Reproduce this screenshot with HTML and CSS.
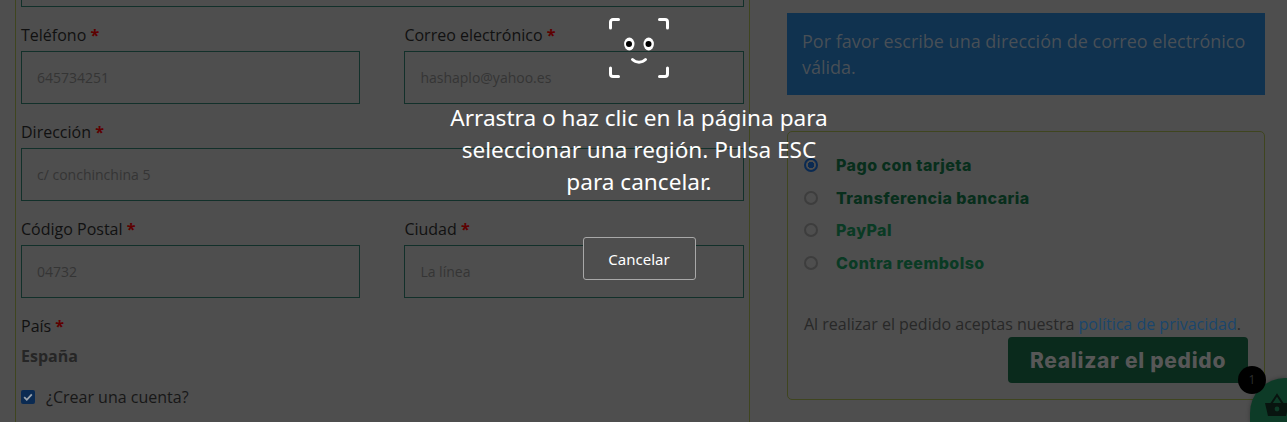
FILE: index.html
```html
<!DOCTYPE html>
<html lang="es">
<head>
<meta charset="utf-8">
<title>Finalizar compra</title>
<link rel="stylesheet" href="styles.css">
</head>
<body>
<main class="page">
  <form class="billing">
    <div class="field field-top"><input class="input" type="text"></div>
    <div class="row">
      <div class="field"><label class="label">Teléfono <b class="req">*</b></label><input class="input" value="645734251"></div>
      <div class="field"><label class="label">Correo electrónico <b class="req">*</b></label><input class="input" value="hashaplo@yahoo.es"></div>
    </div>
    <div class="field"><label class="label">Dirección <b class="req">*</b></label><input class="input" value="c/ conchinchina 5"></div>
    <div class="row">
      <div class="field"><label class="label">Código Postal <b class="req">*</b></label><input class="input" value="04732"></div>
      <div class="field"><label class="label">Ciudad <b class="req">*</b></label><input class="input" value="La línea"></div>
    </div>
    <div class="field"><label class="label">País <b class="req">*</b></label><strong class="country">España</strong></div>
    <label class="account">
      <span class="check"><svg viewBox="0 0 14 14" width="14" height="14"><path d="M3.2 7.2l2.6 2.6 5-5.4" fill="none" stroke="#9aa3ad" stroke-width="1.8"/></svg></span>
      ¿Crear una cuenta?
    </label>
  </form>
  <aside class="side">
    <div class="notice">Por favor escribe una dirección de correo electrónico válida.</div>
    <section class="payment">
      <ul class="methods">
        <li class="method"><span class="radio radio-on"></span>Pago con tarjeta</li>
        <li class="method"><span class="radio"></span>Transferencia bancaria</li>
        <li class="method method-lit"><span class="radio"></span>PayPal</li>
        <li class="method method-lit"><span class="radio"></span>Contra reembolso</li>
      </ul>
      <p class="terms">Al realizar el pedido aceptas nuestra <a class="link">política de privacidad</a>.</p>
      <div class="actions"><button class="submit" type="button">Realizar el pedido</button></div>
    </section>
  </aside>
</main>

<div class="cart">
  <svg class="cart-icon" viewBox="0 0 26 24" width="26" height="24"><path d="M1 10h24l-3 13H4z" fill="#08140f"/><path d="M7 11l6-9 6 9" fill="none" stroke="#08140f" stroke-width="2"/><circle cx="13" cy="16" r="2.4" fill="#0d3b27"/></svg>
</div>
<span class="badge">1</span>

<div class="capture">
  <svg class="face" viewBox="0 0 60 60" width="60" height="60">
    <g fill="none" stroke="#fff" stroke-width="3" stroke-linecap="round" stroke-linejoin="round">
      <path d="M1.5 10V4a2.500 2.500 0 0 1 2.500-2.500H9.500"/>
      <path d="M50.500 1.500H56a2.500 2.500 0 0 1 2.500 2.500v6"/>
      <path d="M1.500 50v6A2.500 2.500 0 0 0 4 58.500h5.500"/>
      <path d="M50.500 58.500H56a2.500 2.500 0 0 0 2.500-2.500v-6"/>
      <path d="M23.500 41.500c3.500 3.500 9.500 3.500 13 0"/>
    </g>
    <ellipse cx="20.300" cy="26" rx="5.200" ry="6.500" fill="#fff"/>
    <ellipse cx="39.700" cy="26" rx="5.200" ry="6.500" fill="#fff"/>
    <circle cx="20" cy="26" r="3" fill="#000"/>
    <circle cx="39.500" cy="26" r="3" fill="#000"/>
  </svg>
  <p class="capture-text">Arrastra o haz clic en la página para seleccionar una región. Pulsa ESC para cancelar.</p>
  <button class="cancel" type="button">Cancelar</button>
</div>
</body>
</html>
```
FILE: styles.css
```css
* { box-sizing: border-box; }
html, body { margin: 0; height: 422px; overflow: hidden; }
body {
  background: #4e4e4e;
  font-family: "Open Sans", "Noto Sans", sans-serif;
  font-size: 16px;
  color: #111;
  position: relative;
}
.page {
  display: flex;
  align-items: flex-start;
  height: 422px;
  padding-left: 15px;
}
.billing {
  width: 735px;
  height: 468px;
  margin-top: -46px;
  padding: 0 5px;
  border-left: 1px solid #3f451f;
  border-right: 1px solid #3f451f;
  flex: none;
}
.row {
  display: grid;
  grid-template-columns: 339.400px 339.600px;
  column-gap: 44px;
}
.field { display: flex; flex-direction: column; }
.field-top { height: 53px; }
.label {
  height: 44px;
  padding-top: 17px;
  line-height: 22px;
  color: #111;
}
.req { color: #5e0000; font-weight: 700; }
.input {
  height: 53px;
  width: 100%;
  padding: 0 15px;
  border: 1px solid #12302a;
  background: transparent;
  font: 14px "Open Sans", sans-serif;
  color: #353535;
  outline: none;
}
.country {
  margin-top: 3px;
  line-height: 22px;
  color: #262626;
  font-weight: 700;
}
.account {
  display: flex;
  align-items: center;
  gap: 11px;
  margin-top: 19px;
  line-height: 22px;
  color: #171717;
}
.check {
  width: 14px;
  height: 14px;
  border-radius: 2px;
  background: #0a2a52;
  display: block;
}
.check svg { display: block; }
.side {
  width: 478px;
  margin-left: 37px;
  padding-top: 13px;
  flex: none;
}
.notice {
  height: 82px;
  padding: 15px;
  background: #10324f;
  color: #484f56;
  font-size: 18px;
  line-height: 26px;
}
.payment {
  height: 269px;
  margin-top: 36px;
  padding: 17px 16px 0;
  border: 1px solid #3f451f;
  border-radius: 5px;
}
.methods { list-style: none; margin: 0; padding: 0; }
.method {
  display: flex;
  align-items: center;
  gap: 18px;
  height: 32.600px;
  font: 800 16px Inter, "Liberation Sans", sans-serif;
  letter-spacing: .45px;
  color: #082e1c;
}
.method-lit { color: #0a3a24; }
.radio {
  width: 14px;
  height: 14px;
  border: 2px solid #3d3d3d;
  border-radius: 50%;
  flex: none;
}
.radio-on {
  border-color: #0a2a52;
  background: radial-gradient(circle, #0a2a52 0 3px, #4e4e4e 3.500px);
}
.terms {
  margin: 34px 0 0;
  font-size: 16px;
  line-height: 22px;
  color: #282828;
  white-space: nowrap;
}
.link { color: #1a466c; }
.actions { display: flex; justify-content: flex-end; margin-top: 2px; }
.submit {
  width: 240px;
  height: 46px;
  border: 0;
  border-radius: 4px;
  background: #0a2a1c;
  color: #575757;
  font: 800 21px Inter, "Liberation Sans", sans-serif;
  letter-spacing: .7px;
}
.cart {
  position: absolute;
  left: 1250px;
  top: 378px;
  width: 37px;
  height: 44px;
  overflow: hidden;
  border-radius: 35px 0 0 0;
  background: #0d3b27;
  box-shadow: 0 0 4px rgba(0,0,0,.3);
}
.cart-icon { position: absolute; left: 14px; top: 15px; }
.badge {
  position: absolute;
  left: 1238px;
  top: 366px;
  width: 28px;
  height: 28px;
  border-radius: 50%;
  background: #000;
  color: #2e2e2e;
  font-size: 12px;
  line-height: 28px;
  text-align: center;
}
.capture {
  position: absolute;
  left: 439px;
  top: 18px;
  width: 400px;
  display: flex;
  flex-direction: column;
  align-items: center;
  color: #fff;
}
.face { display: block; }
.capture-text {
  width: 385px;
  margin: 24px 0 0;
  font: 22.600px/32px "Noto Sans", "Open Sans", sans-serif;
  text-align: center;
}
.cancel {
  width: 113px;
  height: 43px;
  margin-top: 39px;
  border: 1px solid #a8a8a8;
  border-radius: 3px;
  background: #4e4e4e;
  color: #fff;
  font: 15px "Noto Sans", sans-serif;
}
```
